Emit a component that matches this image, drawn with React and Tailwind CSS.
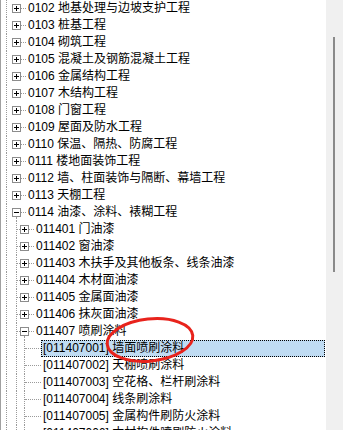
const rows = [
  { lv: 1, code: "0102", name: "地基处理与边坡支护工程" },
  { lv: 1, code: "0103", name: "桩基工程" },
  { lv: 1, code: "0104", name: "砌筑工程" },
  { lv: 1, code: "0105", name: "混凝土及钢筋混凝土工程" },
  { lv: 1, code: "0106", name: "金属结构工程" },
  { lv: 1, code: "0107", name: "木结构工程" },
  { lv: 1, code: "0108", name: "门窗工程" },
  { lv: 1, code: "0109", name: "屋面及防水工程" },
  { lv: 1, code: "0110", name: "保温、隔热、防腐工程" },
  { lv: 1, code: "0111", name: "楼地面装饰工程" },
  { lv: 1, code: "0112", name: "墙、柱面装饰与隔断、幕墙工程" },
  { lv: 1, code: "0113", name: "天棚工程" },
  { lv: 1, code: "0114", name: "油漆、涂料、裱糊工程", open: true },
  { lv: 2, code: "011401", name: "门油漆" },
  { lv: 2, code: "011402", name: "窗油漆" },
  { lv: 2, code: "011403", name: "木扶手及其他板条、线条油漆" },
  { lv: 2, code: "011404", name: "木材面油漆" },
  { lv: 2, code: "011405", name: "金属面油漆" },
  { lv: 2, code: "011406", name: "抹灰面油漆" },
  { lv: 2, code: "011407", name: "喷刷涂料", open: true },
  { lv: 3, code: "011407001", name: "墙面喷刷涂料", selected: true },
  { lv: 3, code: "011407002", name: "天棚喷刷涂料" },
  { lv: 3, code: "011407003", name: "空花格、栏杆刷涂料" },
  { lv: 3, code: "011407004", name: "线条刷涂料" },
  { lv: 3, code: "011407005", name: "金属构件刷防火涂料" },
  { lv: 3, code: "011407006", name: "木材构件喷刷防火涂料" },
];

// vertical dotted guide, optional stub to the right
function Guide({ width, stub }) {
  return (
    <div className={`flex shrink-0 ${width}`}>
      <div className="ml-[4px] border-l border-dotted border-[#9a9a9a]" />
      <div className="flex flex-1 items-center">
        {stub && <div className="w-full border-t border-dotted border-[#9a9a9a]" />}
      </div>
    </div>
  );
}

function Box({ open }) {
  return (
    <div className="flex w-[9px] shrink-0 flex-col">
      <div className="flex-1" />
      <svg width="9" height="9" viewBox="0 0 9 9" shapeRendering="crispEdges">
        <rect x="0.5" y="0.5" width="8" height="8" fill="#fff" stroke="#8c8c8c" />
        <line x1="2" y1="4.5" x2="7" y2="4.5" stroke="#000" />
        {!open && <line x1="4.5" y1="2" x2="4.5" y2="7" stroke="#000" />}
      </svg>
      <div className="flex flex-1">
        {open && <div className="ml-[4px] border-l border-dotted border-[#9a9a9a]" />}
      </div>
    </div>
  );
}

function Row({ lv, code, name, open, selected }) {
  return (
    <div className="flex h-[17px] items-stretch">
      <div className="flex w-[11px] shrink-0">
        <div className="ml-[5px] border-l border-dotted border-[#9a9a9a]" />
      </div>
      {lv >= 2 && <Guide width="w-[8px]" stub={lv === 2} />}
      {lv === 3 && <Guide width="w-[21px]" stub />}
      {lv < 3 && (
        <>
          <Box open={open} />
          <div className="flex w-[5px] shrink-0 items-center">
            <div className="w-full border-t border-dotted border-[#9a9a9a]" />
          </div>
        </>
      )}
      <div
        className={`flex items-center whitespace-nowrap border px-[1px] ${
          lv === 3 ? "mr-[1px] flex-1" : ""
        } ${selected ? "border-dotted border-black bg-[#c0dcf3]" : "border-transparent"}`}
      >
        {lv === 3 ? `[${code}] ${name}` : `${code} ${name}`}
      </div>
    </div>
  );
}

export default function App() {
  return (
    <div
      className="relative flex h-[431px] w-[343px] overflow-hidden bg-white text-[12px] leading-[17px] text-black"
      style={{ fontFamily: '"Liberation Sans", "Noto Sans CJK SC", sans-serif' }}
    >
      {/* TREE */}
      <div className="h-[430px] w-[326px] overflow-hidden border-l border-[#a0a0a0]">
        {rows.map((r) => (
          <Row key={r.code} {...r} />
        ))}
      </div>

      {/* SCROLLBAR */}
      <div className="flex h-[430px] w-[17px] flex-col bg-[#f0f0f0]">
        <div className="h-[37px]" />
        <div className="ml-[7px] h-[235px] w-[2px] bg-[#8a8a8a]" />
      </div>

      {/* RED MARK */}
      <svg className="pointer-events-none absolute left-0 top-0" width="343" height="431">
        <ellipse
          cx="150"
          cy="340"
          rx="43"
          ry="21"
          transform="rotate(-6 150 340)"
          fill="none"
          stroke="#e8231c"
          strokeWidth="3"
        />
      </svg>
    </div>
  );
}
